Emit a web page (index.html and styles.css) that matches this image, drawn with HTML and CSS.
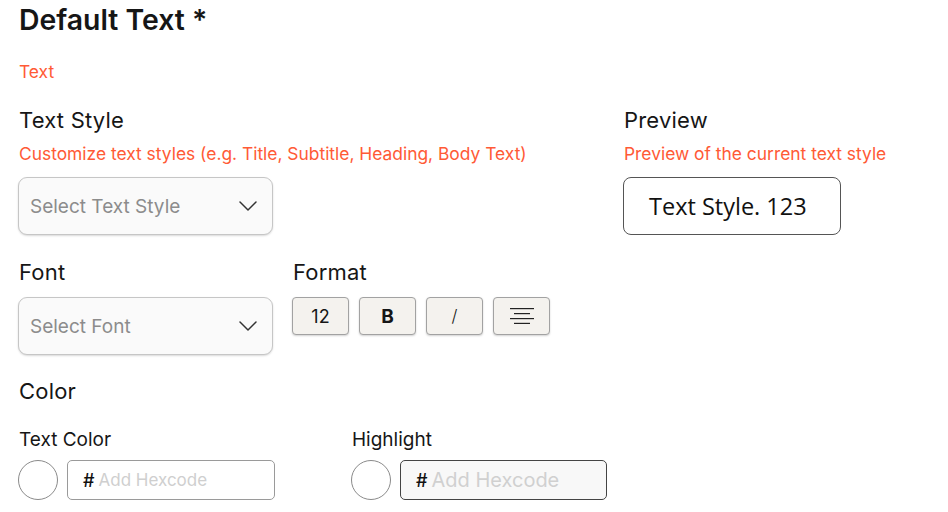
FILE: index.html
```html
<!DOCTYPE html>
<html>
<head>
<meta charset="utf-8">
<link rel="stylesheet" href="styles.css">
</head>
<body>
<div class="page">
  <h1 class="title">Default Text *</h1>
  <div class="type-label">Text</div>

  <div class="row-style">
    <div class="col-style">
      <div class="label">Text Style</div>
      <div class="hint">Customize text styles (e.g. Title, Subtitle, Heading, Body Text)</div>
      <div class="select">
        <span class="placeholder">Select Text Style</span>
        <svg class="chev" width="18" height="10" viewBox="0 0 18 10"><path d="M1 1 L9 9 L17 1" fill="none" stroke="#333" stroke-width="1.5" stroke-linecap="round" stroke-linejoin="round"/></svg>
      </div>
    </div>
    <div class="col-preview">
      <div class="label">Preview</div>
      <div class="hint">Preview of the current text style</div>
      <div class="preview-box">Text Style. 123</div>
    </div>
  </div>

  <div class="row-font">
    <div class="col-font">
      <div class="label">Font</div>
      <div class="select">
        <span class="placeholder">Select Font</span>
        <svg class="chev" width="18" height="10" viewBox="0 0 18 10"><path d="M1 1 L9 9 L17 1" fill="none" stroke="#333" stroke-width="1.5" stroke-linecap="round" stroke-linejoin="round"/></svg>
      </div>
    </div>
    <div class="col-format">
      <div class="label">Format</div>
      <div class="btns">
        <div class="btn">12</div>
        <div class="btn bold">B</div>
        <div class="btn italic">/</div>
        <div class="btn">
          <svg width="24" height="16" viewBox="0 0 24 16"><g stroke="#222" stroke-width="1.2"><line x1="0" y1="0.6" x2="24" y2="0.6"/><line x1="4" y1="5.6" x2="20" y2="5.6"/><line x1="0" y1="10.6" x2="24" y2="10.6"/><line x1="4" y1="15.4" x2="20" y2="15.4"/></g></svg>
        </div>
      </div>
    </div>
  </div>

  <div class="section-label">Color</div>

  <div class="row-color">
    <div class="col-color">
      <div class="sublabel">Text Color</div>
      <div class="color-input">
        <div class="swatch"></div>
        <div class="hex"><span class="hash">#</span><span class="hex-ph">Add Hexcode</span></div>
      </div>
    </div>
    <div class="col-color">
      <div class="sublabel">Highlight</div>
      <div class="color-input">
        <div class="swatch"></div>
        <div class="hex hex-alt"><span class="hash">#</span><span class="hex-ph">Add Hexcode</span></div>
      </div>
    </div>
  </div>
</div>
</body>
</html>
```

FILE: styles.css
```css
* { box-sizing: border-box; }
html, body { margin: 0; padding: 0; background: #fff; }
body {
  font-family: Inter, "Noto Sans", sans-serif;
  color: #161616;
}
.page {
  padding: 4px 0 0 18px;
}
.title {
  margin: 0 0 0 1px;
  font-size: 28.4px;
  font-weight: 600;
  line-height: 32px;
}
.type-label {
  margin: 26px 0 0 1px;
  font-size: 17.4px;
  line-height: 20px;
  color: #ff5a36;
}
.row-style {
  display: flex;
  margin-top: 25px;
}
.col-style { width: 605px; }
.label {
  font-size: 22px;
  line-height: 26px;
  margin-left: 1px;
  letter-spacing: 0.2px;
}
.hint {
  font-size: 17.4px;
  line-height: 22px;
  color: #ff5a36;
  margin: 10px 0 0 1px;
}
.select {
  margin-top: 12px;
  width: 255px;
  height: 58px;
  border: 1px solid #c6c6c6;
  border-radius: 9px;
  background: #fafafa;
  box-shadow: 0 1px 2px rgba(0,0,0,0.15);
  display: flex;
  align-items: center;
  justify-content: space-between;
  padding: 0 15px 0 11px;
}
.placeholder {
  font-size: 19px;
  color: #8c8c8c;
}
.preview-box {
  margin-top: 12px;
  width: 218px;
  height: 58px;
  border: 1px solid #555;
  border-radius: 8px;
  display: flex;
  align-items: center;
  padding-left: 25px;
  font-family: "Open Sans", "Noto Sans", sans-serif;
  font-size: 23.5px;
  color: #111;
}
.row-font {
  display: flex;
  margin-top: 24px;
}
.col-font { width: 274px; }
.col-format .btns {
  display: flex;
  gap: 10px;
  margin-top: 12px;
}
.btn {
  width: 57px;
  height: 38px;
  border: 1px solid #a2a2a2;
  border-radius: 4px;
  background: #f4f2ee;
  box-shadow: 0 1px 2px rgba(0,0,0,0.18);
  display: flex;
  align-items: center;
  justify-content: center;
  font-size: 18px;
  color: #161616;
}
.btn.bold { font-weight: 700; font-size: 19px; }
.btn.italic { font-size: 17px; font-weight: 300; }
.section-label {
  margin: 23px 0 0 1px;
  font-size: 22px;
  line-height: 26px;
  letter-spacing: 0.2px;
}
.row-color {
  display: flex;
  margin-top: 25px;
}
.col-color { width: 333px; }
.sublabel {
  font-size: 19px;
  line-height: 22px;
  margin-left: 1px;
}
.color-input {
  display: flex;
  gap: 9px;
  margin-top: 9px;
}
.swatch {
  width: 40px;
  height: 40px;
  border-radius: 50%;
  border: 1px solid #8a8a8a;
  background: #fff;
}
.hex {
  width: 208px;
  height: 40px;
  border: 1px solid #9a9a9a;
  border-radius: 5px;
  display: flex;
  align-items: center;
  padding-left: 15px;
  gap: 4px;
}
.hash { font-size: 18px; color: #111; font-weight: 500; }
.hex-ph { font-size: 17px; color: #cfcfcf; }
.hex-alt {
  border-color: #444;
  background: #f8f8f8;
  width: 207px;
}
.hex-alt .hex-ph { font-size: 20px; color: #d0d0d0; }
```
